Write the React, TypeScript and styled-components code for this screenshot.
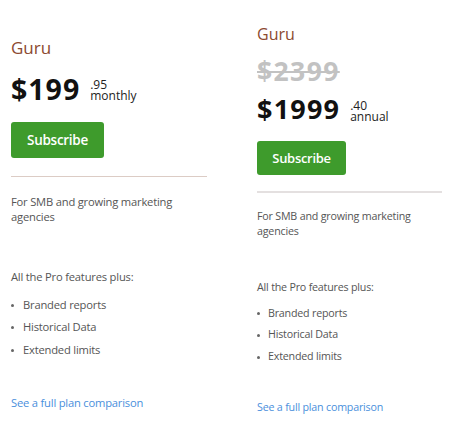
import React from "react";
import styled, { createGlobalStyle } from "styled-components";

const GlobalStyle = createGlobalStyle`
  html, body { margin: 0; padding: 0; background: #ffffff; }
  body { font-family: "Open Sans", "Noto Sans", sans-serif; -webkit-font-smoothing: antialiased; }
  * { box-sizing: border-box; }
`;

type Metrics = {
  width: number;
  padTop: number;
  titleSize: number;
  oldGap: number;
  oldSize: number;
  priceGap: number;
  priceSize: number;
  priceSpacing: number;
  centsShift: number;
  btnGap: number;
  btnW: number;
  btnH: number;
  btnSize: number;
  divGap: number;
  divH: number;
  divColor: string;
  body: number;
  bodyLH: number;
  descGap: number;
  featGap: number;
  listGap: number;
  itemLH: number;
  bulletIndent: number;
  linkGap: number;
};

const monthly: Metrics = {
  width: 196,
  padTop: 38,
  titleSize: 17,
  oldGap: 0,
  oldSize: 0,
  priceGap: 15,
  priceSize: 28.5,
  priceSpacing: 1,
  centsShift: 4,
  btnGap: 17,
  btnW: 93,
  btnH: 36,
  btnSize: 13.5,
  divGap: 18,
  divH: 1,
  divColor: "#dcccc5",
  body: 11.2,
  bodyLH: 14.5,
  descGap: 18,
  featGap: 46,
  listGap: 9,
  itemLH: 22.5,
  bulletIndent: 12,
  linkGap: 35,
};

const annual: Metrics = {
  width: 185,
  padTop: 24,
  titleSize: 16,
  oldGap: 12,
  oldSize: 26.5,
  priceGap: 7,
  priceSize: 27,
  priceSpacing: 1.2,
  centsShift: 3,
  btnGap: 16,
  btnW: 89,
  btnH: 34,
  btnSize: 13,
  divGap: 16,
  divH: 2,
  divColor: "#e4e0e0",
  body: 10.7,
  bodyLH: 14.5,
  descGap: 16,
  featGap: 42,
  listGap: 8,
  itemLH: 21.7,
  bulletIndent: 11,
  linkGap: 32,
};

const Page = styled.div`
  display: flex;
  align-items: flex-start;
  gap: 50px;
  padding-left: 11px;
  width: 450px;
  height: 430px;
  overflow: hidden;
`;

const Plan = styled.section<{ $m: Metrics }>`
  display: flex;
  flex-direction: column;
  align-items: flex-start;
  width: ${(p) => p.$m.width}px;
  padding-top: ${(p) => p.$m.padTop}px;
`;

const Title = styled.h3<{ $m: Metrics }>`
  margin: 0;
  font-size: ${(p) => p.$m.titleSize}px;
  line-height: 20px;
  font-weight: 400;
  color: #8c4a30;
`;

const OldPrice = styled.div<{ $m: Metrics }>`
  margin-top: ${(p) => p.$m.oldGap}px;
  font-size: ${(p) => p.$m.oldSize}px;
  line-height: 30px;
  font-weight: 700;
  color: #c2c2c2;
  text-decoration: line-through;
  text-decoration-thickness: 2px;
  letter-spacing: 1.4px;
`;

const PriceRow = styled.div<{ $m: Metrics }>`
  display: flex;
  align-items: flex-end;
  gap: 10px;
  margin-top: ${(p) => p.$m.priceGap}px;
`;

const Amount = styled.span<{ $m: Metrics }>`
  font-size: ${(p) => p.$m.priceSize}px;
  line-height: 32px;
  font-weight: 700;
  color: #111111;
  letter-spacing: ${(p) => p.$m.priceSpacing}px;
`;

const CentsStack = styled.span<{ $m: Metrics }>`
  display: flex;
  flex-direction: column;
  margin-bottom: ${(p) => p.$m.centsShift}px;
  font-size: 12px;
  line-height: 10.5px;
  color: #222222;
`;

const SubscribeButton = styled.button<{ $m: Metrics }>`
  margin-top: ${(p) => p.$m.btnGap}px;
  width: ${(p) => p.$m.btnW}px;
  height: ${(p) => p.$m.btnH}px;
  border: none;
  border-radius: 3px;
  background: #3e9b2c;
  color: #ffffff;
  font-family: inherit;
  font-size: ${(p) => p.$m.btnSize}px;
  font-weight: 600;
  letter-spacing: -0.3px;
  padding: 0;
  cursor: pointer;
`;

const Divider = styled.hr<{ $m: Metrics }>`
  align-self: stretch;
  margin: ${(p) => p.$m.divGap}px 0 0;
  border: none;
  height: ${(p) => p.$m.divH}px;
  background: ${(p) => p.$m.divColor};
`;

const BodyText = styled.p<{ $m: Metrics; $gap: number }>`
  margin: ${(p) => p.$gap}px 0 0;
  font-size: ${(p) => p.$m.body}px;
  line-height: ${(p) => p.$m.bodyLH}px;
  letter-spacing: -0.2px;
  color: #555555;
`;

const FeatureList = styled.ul<{ $m: Metrics }>`
  margin: ${(p) => p.$m.listGap}px 0 0;
  padding: 0;
  list-style: none;
`;

const FeatureItem = styled.li<{ $m: Metrics }>`
  position: relative;
  padding-left: ${(p) => p.$m.bulletIndent}px;
  font-size: ${(p) => p.$m.body}px;
  line-height: ${(p) => p.$m.itemLH}px;
  letter-spacing: -0.2px;
  color: #555555;

  &::before {
    content: "";
    position: absolute;
    left: 0;
    top: 50%;
    width: 3px;
    height: 3px;
    margin-top: -1px;
    border-radius: 50%;
    background: #666666;
  }
`;

const CompareLink = styled.a<{ $m: Metrics }>`
  margin-top: ${(p) => p.$m.linkGap}px;
  font-size: ${(p) => p.$m.body}px;
  line-height: ${(p) => p.$m.bodyLH}px;
  letter-spacing: -0.2px;
  color: #4a8fdc;
  text-decoration: none;
`;

type PlanProps = {
  m: Metrics;
  oldPrice?: string;
  price: string;
  cents: string;
  period: string;
};

const features = ["Branded reports", "Historical Data", "Extended limits"];

function PlanColumn({ m, oldPrice, price, cents, period }: PlanProps) {
  return (
    <Plan $m={m}>
      <Title $m={m}>Guru</Title>
      {oldPrice && <OldPrice $m={m}>{oldPrice}</OldPrice>}
      <PriceRow $m={m}>
        <Amount $m={m}>{price}</Amount>
        <CentsStack $m={m}>
          <span>{cents}</span>
          <span>{period}</span>
        </CentsStack>
      </PriceRow>
      <SubscribeButton $m={m}>Subscribe</SubscribeButton>
      <Divider $m={m} />
      <BodyText $m={m} $gap={m.descGap}>
        For SMB and growing marketing
        <br />
        agencies
      </BodyText>
      <BodyText $m={m} $gap={m.featGap}>
        All the Pro features plus:
      </BodyText>
      <FeatureList $m={m}>
        {features.map((f) => (
          <FeatureItem $m={m} key={f}>
            {f}
          </FeatureItem>
        ))}
      </FeatureList>
      <CompareLink $m={m} href="#">
        See a full plan comparison
      </CompareLink>
    </Plan>
  );
}

export default function App() {
  return (
    <>
      <GlobalStyle />
      <Page>
        <PlanColumn m={monthly} price="$199" cents=".95" period="monthly" />
        <PlanColumn
          m={annual}
          oldPrice="$2399"
          price="$1999"
          cents=".40"
          period="annual"
        />
      </Page>
    </>
  );
}
